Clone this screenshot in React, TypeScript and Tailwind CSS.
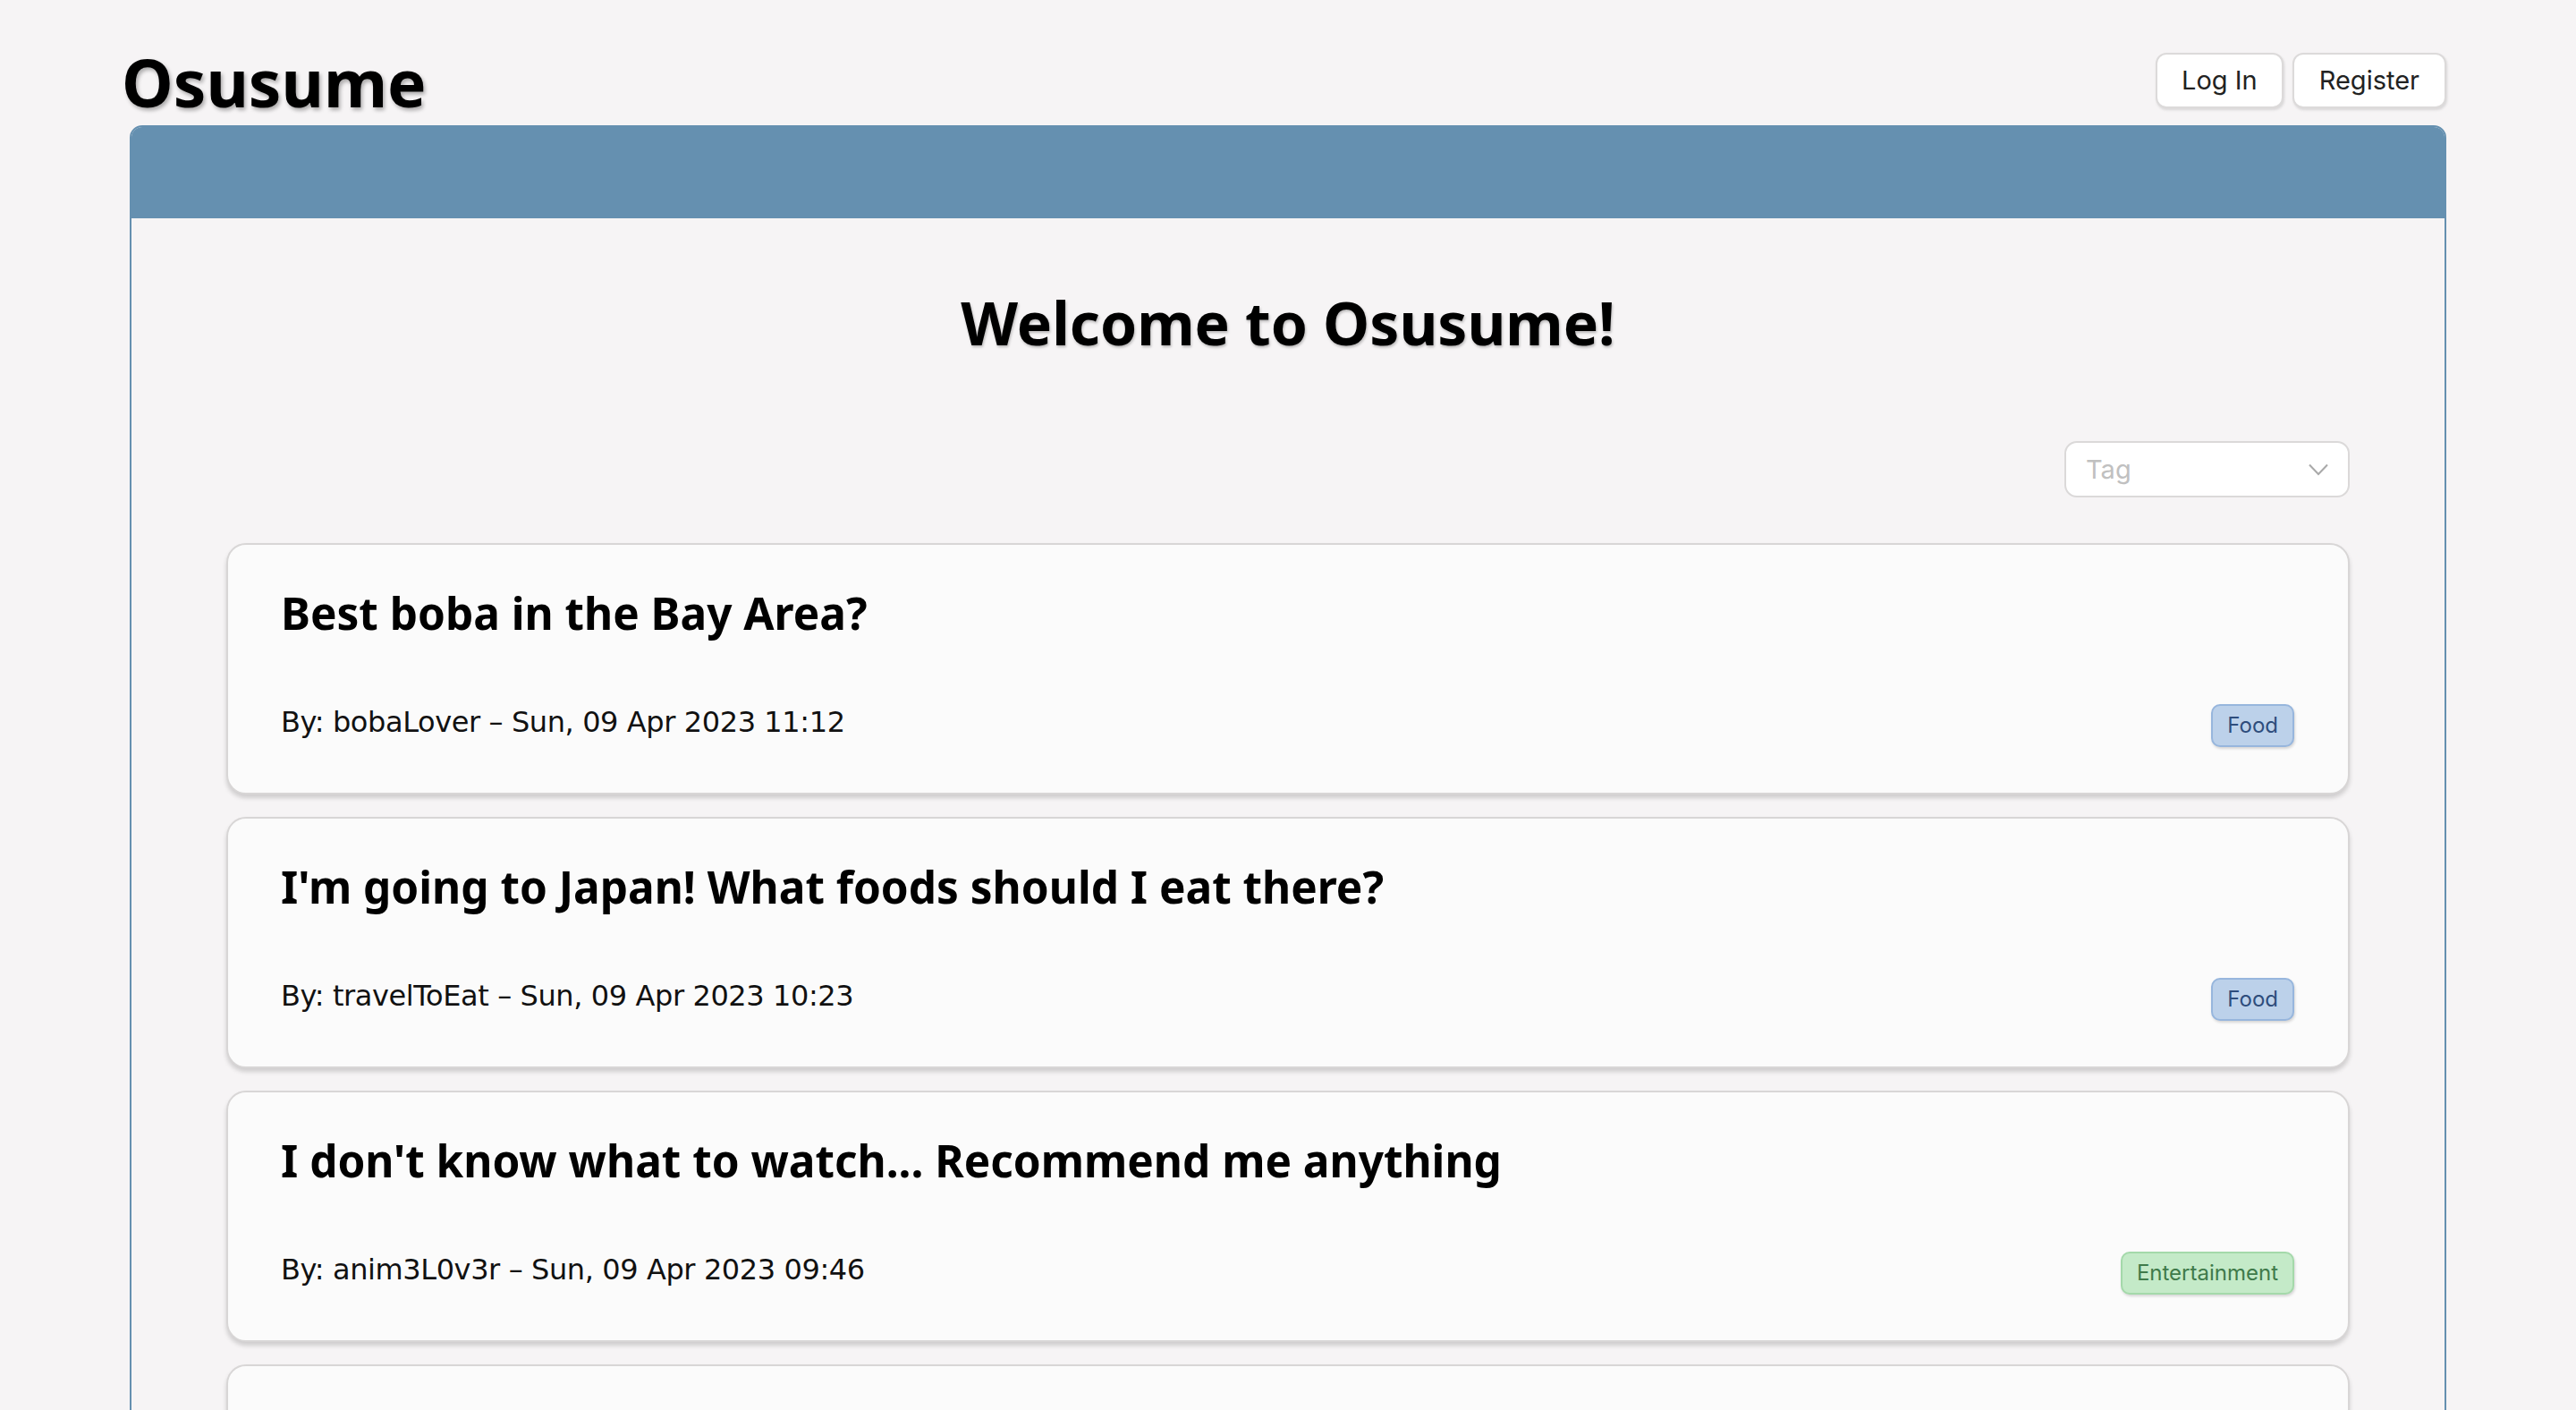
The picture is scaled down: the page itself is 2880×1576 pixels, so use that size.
import React from 'react';

type Post = {
  title: string;
  author: string;
  date: string;
  tag: 'Food' | 'Entertainment';
};

const posts: Post[] = [
  { title: 'Best boba in the Bay Area?', author: 'bobaLover', date: 'Sun, 09 Apr 2023 11:12', tag: 'Food' },
  {
    title: "I'm going to Japan! What foods should I eat there?",
    author: 'travelToEat',
    date: 'Sun, 09 Apr 2023 10:23',
    tag: 'Food',
  },
  {
    title: "I don't know what to watch... Recommend me anything",
    author: 'anim3L0v3r',
    date: 'Sun, 09 Apr 2023 09:46',
    tag: 'Entertainment',
  },
  { title: 'Favorite ramen spots in SF?', author: 'noodleFan', date: 'Sat, 08 Apr 2023 21:05', tag: 'Food' },
];

const TagBadge: React.FC<{ tag: Post['tag'] }> = ({ tag }) => {
  const color =
    tag === 'Food'
      ? 'bg-[#bcd1ea] border-[#97b6dd] text-[#2e4d7c]'
      : 'bg-[#c4eac8] border-[#a4d9aa] text-[#3f7a4a]';
  return (
    <span
      className={`flex h-[48px] items-center rounded-[10px] border-2 px-[16px] font-['Inter'] text-[24px] shadow-[1px_2px_3px_rgba(0,0,0,0.15)] ${color}`}
    >
      {tag}
    </span>
  );
};

const PostCard: React.FC<{ post: Post }> = ({ post }) => {
  return (
    <div className="h-[281px] rounded-[22px] border-2 border-[#d8d6d6] bg-[#fbfbfb] pl-[59px] pr-[60px] pt-[52px] shadow-[0_4px_5px_rgba(0,0,0,0.16)]">
      <h3 className="font-['Noto_Sans'] text-[49.5px] font-bold leading-none text-black">{post.title}</h3>
      <div className="mt-[76px] flex items-center justify-between">
        <p className="mb-[7px] text-[32px] leading-none tracking-[-0.4px] text-[#111]">
          By: {post.author} – {post.date}
        </p>
        <TagBadge tag={post.tag} />
      </div>
    </div>
  );
};

const App: React.FC = () => {
  return (
    <div className="min-h-screen bg-[#f6f4f5] px-[145px] font-['DejaVu_Sans',sans-serif]">
      <header className="flex h-[140px] items-start justify-between pt-[55px]">
        <h1 className="-ml-[9px] font-['Noto_Sans'] text-[73px] font-bold leading-none text-black [text-shadow:2px_3px_4px_rgba(0,0,0,0.3)]">
          Osusume
        </h1>
        <div className="mt-[4px] flex gap-[10px] font-['Inter'] text-[29px] text-[#222]">
          <button className="h-[62px] rounded-[12px] border-2 border-[#dcdada] bg-white px-[27px] shadow-[1px_2px_3px_rgba(0,0,0,0.12)]">
            Log In
          </button>
          <button className="h-[62px] rounded-[12px] border-2 border-[#dcdada] bg-white px-[28px] shadow-[1px_2px_3px_rgba(0,0,0,0.12)]">
            Register
          </button>
        </div>
      </header>

      <main className="overflow-hidden rounded-t-[14px] border-2 border-[#6590b0]">
        <div className="h-[102px] bg-[#6590b0]" />
        <div className="px-[106px] pb-[60px]">
          <h2 className="mt-[83px] text-center font-['Noto_Sans'] text-[66px] font-bold leading-none text-black [text-shadow:1px_2px_3px_rgba(0,0,0,0.25)]">
            Welcome to Osusume!
          </h2>
          <div className="mt-[100px] flex justify-end">
            <div className="flex h-[63px] w-[319px] items-center justify-between rounded-[14px] border-2 border-[#dbd9d9] bg-white pl-[22px] pr-[22px] font-['Inter'] text-[29px] text-[#c0c0c0]">
              <span>Tag</span>
              <svg width="22" height="14" viewBox="0 0 22 14" fill="none">
                <path d="M1 1.5L11 12L21 1.5" stroke="#a9a9a9" strokeWidth="2" />
              </svg>
            </div>
          </div>
          <div className="mt-[51px] flex flex-col gap-[25px]">
            {posts.map((post) => (
              <PostCard key={post.title} post={post} />
            ))}
          </div>
        </div>
      </main>
    </div>
  );
};

export default App;
